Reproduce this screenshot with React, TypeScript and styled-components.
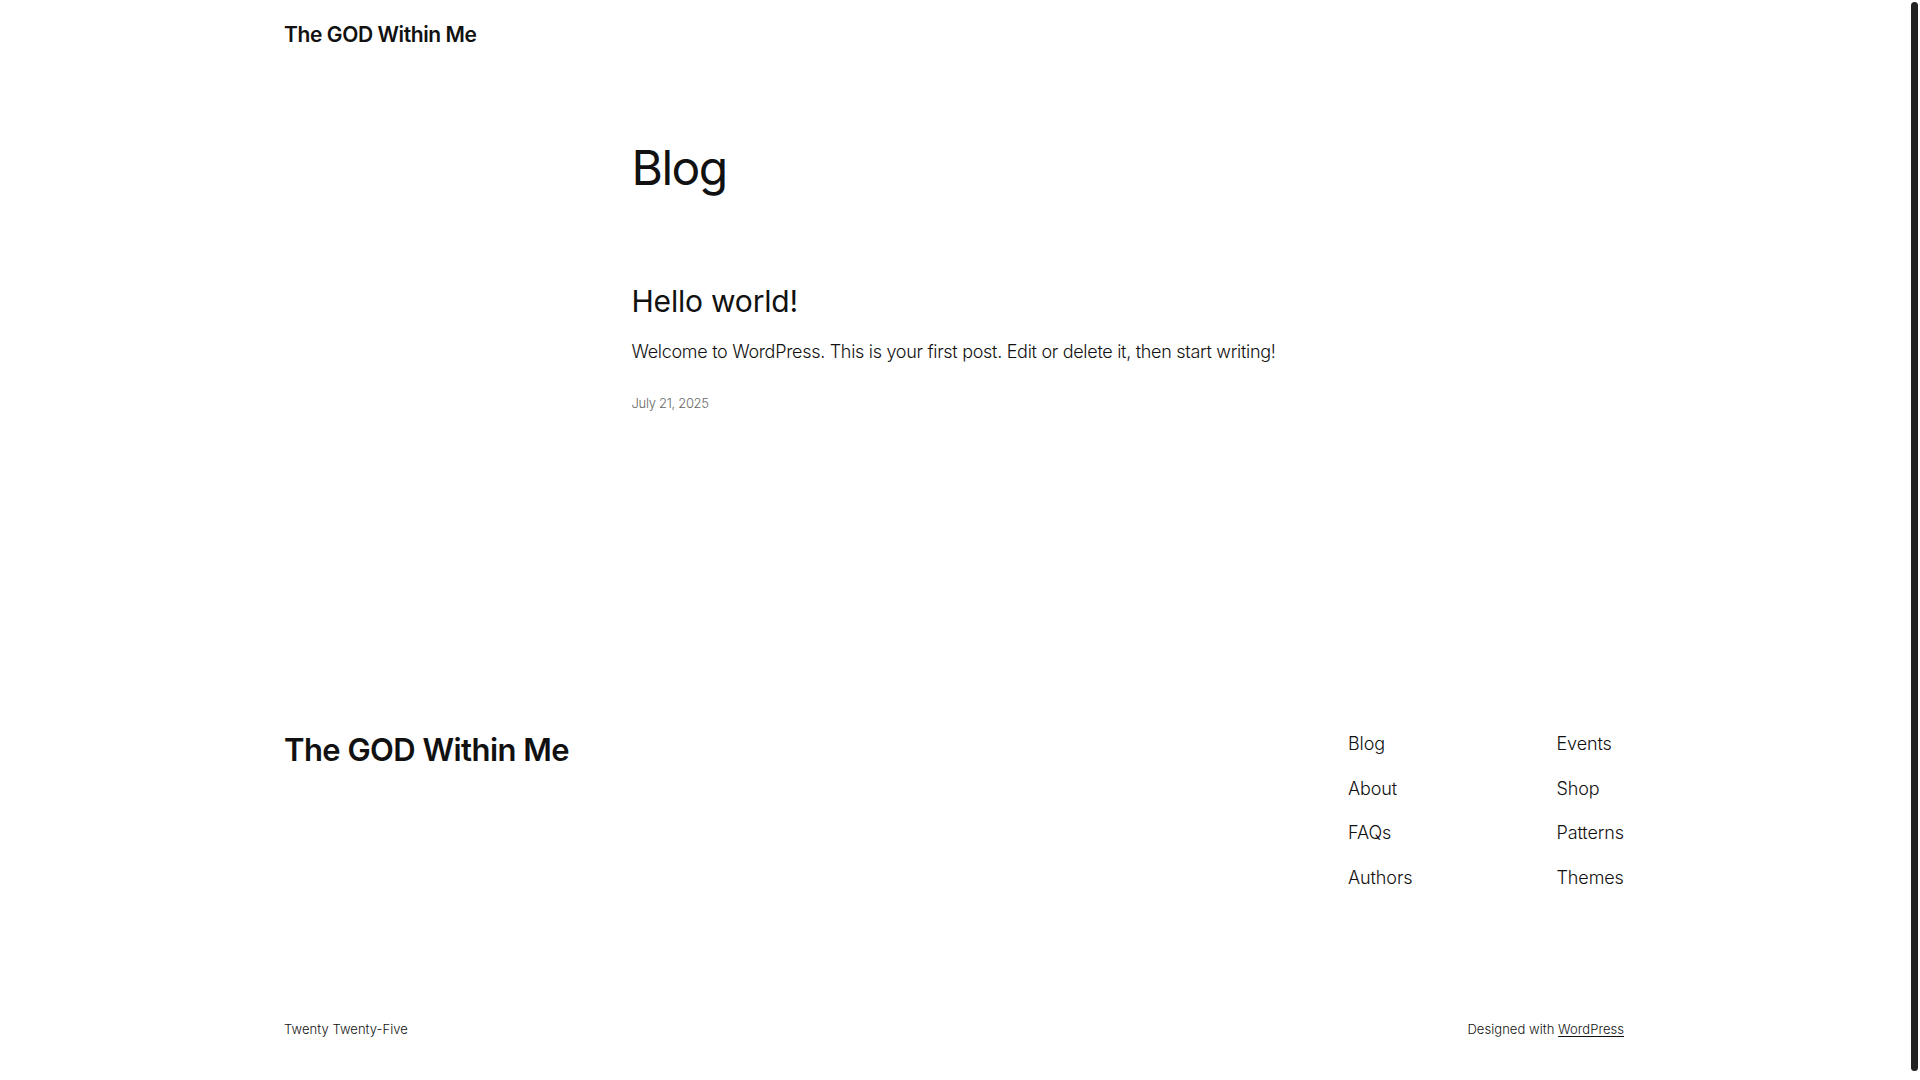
import styled, { createGlobalStyle } from 'styled-components';

const GlobalStyle = createGlobalStyle`
  html, body {
    margin: 0;
    padding: 0;
    background: #ffffff;
  }

  body {
    font-family: 'Inter', 'Noto Sans', sans-serif;
    color: #111111;
    -webkit-font-smoothing: antialiased;
    padding-right: 12px;
  }
`;

// the browser's scroll thumb, drawn over the right edge
const ScrollThumb = styled.div`
  position: fixed;
  top: 2px;
  bottom: 9px;
  right: 2px;
  width: 7px;
  border-radius: 4px;
  background: #222222;
`;

const Page = styled.div`
  display: flex;
  flex-direction: column;
`;

const Wide = styled.div`
  max-width: 1340px;
  width: 100%;
  margin: 0 auto;
`;

const Header = styled(Wide)`
  padding: 21px 0 19px;
`;

const SiteTitle = styled.a<{ $large?: boolean }>`
  display: inline-block;
  color: #111111;
  text-decoration: none;
  font-weight: 600;
  font-size: ${(p) => (p.$large ? '31px' : '21px')};
  line-height: ${(p) => (p.$large ? '38px' : '28px')};
  letter-spacing: ${(p) => (p.$large ? '-0.55px' : '-0.4px')};
`;

const Main = styled.main`
  max-width: 645px;
  width: 100%;
  margin: 0 auto;
  padding-top: 71px;
`;

const PageTitle = styled.h1`
  margin: 0;
  font-size: 48px;
  line-height: 58px;
  font-weight: 400;
  letter-spacing: -1.5px;
`;

const Post = styled.article`
  display: flex;
  flex-direction: column;
  margin-top: 86px;
`;

const PostTitle = styled.h2`
  margin: 0;
  font-size: 30px;
  line-height: 36px;
  font-weight: 400;
  letter-spacing: -0.2px;
`;

const Excerpt = styled.p`
  margin: 20px 0 0;
  font-size: 18px;
  line-height: 25px;
  font-weight: 300;
  letter-spacing: -0.3px;
`;

const PostDate = styled.time`
  margin-top: 29px;
  font-size: 13px;
  line-height: 20px;
  font-weight: 300;
  letter-spacing: -0.3px;
  color: #686868;
`;

const Footer = styled(Wide)`
  margin-top: 318px;
  display: flex;
  flex-direction: column;
  padding-bottom: 40px;
`;

const FooterTop = styled.div`
  display: flex;
  justify-content: space-between;
  align-items: flex-start;
`;

const NavColumns = styled.nav`
  display: flex;
  gap: 144px;
`;

const NavList = styled.ul`
  list-style: none;
  margin: 0;
  padding: 0;
  display: flex;
  flex-direction: column;
  gap: 19.5px;
`;

const NavLink = styled.a`
  display: block;
  color: #111111;
  text-decoration: none;
  font-size: 18px;
  line-height: 25px;
  font-weight: 300;
  letter-spacing: -0.1px;
`;

const FooterBottom = styled.div`
  margin-top: 129px;
  display: flex;
  justify-content: space-between;
  font-size: 13px;
  line-height: 20px;
  font-weight: 300;
  letter-spacing: 0.05px;
`;

const Credit = styled.span`
  color: #111111;
`;

const CreditLink = styled.a`
  color: #111111;
  text-decoration: underline;
  text-underline-offset: 2px;
`;

const leftLinks = ['Blog', 'About', 'FAQs', 'Authors'];
const rightLinks = ['Events', 'Shop', 'Patterns', 'Themes'];

function App() {
  return (
    <>
      <GlobalStyle />
      <Page>
        <Header as='header'>
          <SiteTitle href='#'>The GOD Within Me</SiteTitle>
        </Header>

        <Main>
          <PageTitle>Blog</PageTitle>
          <Post>
            <PostTitle>Hello world!</PostTitle>
            <Excerpt>
              Welcome to WordPress. This is your first post. Edit or delete it,
              then start writing!
            </Excerpt>
            <PostDate>July 21, 2025</PostDate>
          </Post>
        </Main>

        <Footer as='footer'>
          <FooterTop>
            <SiteTitle href='#' $large>
              The GOD Within Me
            </SiteTitle>
            <NavColumns>
              <NavList>
                {leftLinks.map((l) => (
                  <li key={l}>
                    <NavLink href='#'>{l}</NavLink>
                  </li>
                ))}
              </NavList>
              <NavList>
                {rightLinks.map((l) => (
                  <li key={l}>
                    <NavLink href='#'>{l}</NavLink>
                  </li>
                ))}
              </NavList>
            </NavColumns>
          </FooterTop>
          <FooterBottom>
            <Credit>Twenty Twenty-Five</Credit>
            <Credit>
              Designed with <CreditLink href='#'>WordPress</CreditLink>
            </Credit>
          </FooterBottom>
        </Footer>
      </Page>
      <ScrollThumb />
    </>
  );
}

export default App;
